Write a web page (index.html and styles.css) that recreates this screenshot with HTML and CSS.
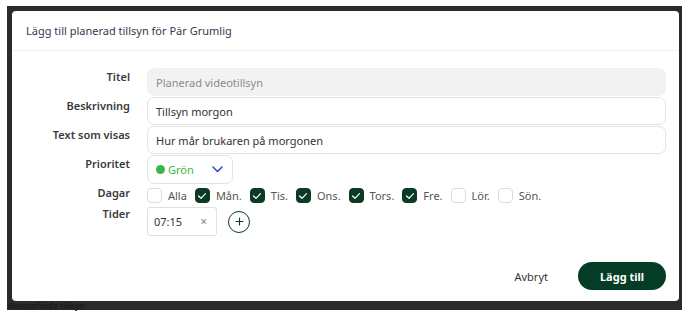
FILE: index.html
```html
<!DOCTYPE html>
<html lang="sv">
<head>
<meta charset="utf-8">
<link rel="stylesheet" href="styles.css">
</head>
<body>
<div class="overlay">
  <div class="modal">
    <div class="modal-header">Lägg till planerad tillsyn för Pär Grumlig</div>
    <div class="modal-body">
      <div class="label">Titel</div>
      <div class="input disabled">Planerad videotillsyn</div>

      <div class="label">Beskrivning</div>
      <div class="input">Tillsyn morgon</div>

      <div class="label">Text som visas</div>
      <div class="input">Hur mår brukaren på morgonen</div>

      <div class="label">Prioritet</div>
      <div class="field-row">
        <div class="select">
          <span class="dot"></span>
          <span class="select-text">Grön</span>
          <svg class="chevron" width="11" height="7" viewBox="0 0 11 7"><path d="M1 1 L5.5 5.5 L10 1" fill="none" stroke="#3550c4" stroke-width="1.6" stroke-linecap="round" stroke-linejoin="round"/></svg>
        </div>
      </div>

      <div class="label label-center">Dagar</div>
      <div class="days">
        <label class="day"><span class="box"></span><span class="day-text">Alla</span></label>
        <label class="day"><span class="box checked"><svg width="10" height="8" viewBox="0 0 10 8"><path d="M1.5 4 L4 6.3 L8.5 1.7" fill="none" stroke="#fff" stroke-width="1.2" stroke-linecap="round" stroke-linejoin="round"/></svg></span><span class="day-text">Mån.</span></label>
        <label class="day"><span class="box checked"><svg width="10" height="8" viewBox="0 0 10 8"><path d="M1.5 4 L4 6.3 L8.5 1.7" fill="none" stroke="#fff" stroke-width="1.2" stroke-linecap="round" stroke-linejoin="round"/></svg></span><span class="day-text">Tis.</span></label>
        <label class="day"><span class="box checked"><svg width="10" height="8" viewBox="0 0 10 8"><path d="M1.5 4 L4 6.3 L8.5 1.7" fill="none" stroke="#fff" stroke-width="1.2" stroke-linecap="round" stroke-linejoin="round"/></svg></span><span class="day-text">Ons.</span></label>
        <label class="day"><span class="box checked"><svg width="10" height="8" viewBox="0 0 10 8"><path d="M1.5 4 L4 6.3 L8.5 1.7" fill="none" stroke="#fff" stroke-width="1.2" stroke-linecap="round" stroke-linejoin="round"/></svg></span><span class="day-text">Tors.</span></label>
        <label class="day"><span class="box checked"><svg width="10" height="8" viewBox="0 0 10 8"><path d="M1.5 4 L4 6.3 L8.5 1.7" fill="none" stroke="#fff" stroke-width="1.2" stroke-linecap="round" stroke-linejoin="round"/></svg></span><span class="day-text">Fre.</span></label>
        <label class="day"><span class="box"></span><span class="day-text">Lör.</span></label>
        <label class="day"><span class="box"></span><span class="day-text">Sön.</span></label>
      </div>

      <div class="label">Tider</div>
      <div class="times">
        <div class="chip"><span class="chip-text">07:15</span><span class="chip-x">×</span></div>
        <div class="add">
          <svg width="9" height="9" viewBox="0 0 9 9"><path d="M4.5 1 V8 M1 4.5 H8" stroke="#0b3b25" stroke-width="1.1" stroke-linecap="round"/></svg>
        </div>
      </div>
    </div>
    <div class="modal-footer">
      <button class="btn-cancel">Avbryt</button>
      <button class="btn-primary">Lägg till</button>
    </div>
  </div>
  <div class="under-text">Genomförde tillsyn</div>
</div>
</body>
</html>
```

FILE: styles.css
```css
* { box-sizing: border-box; }
html, body {
  margin: 0;
  padding: 0;
  background: #ffffff;
}
body {
  width: 688px;
  height: 313px;
  padding: 6px 6px 3px 7px;
  font-family: "Noto Sans", "Open Sans", sans-serif;
  overflow: hidden;
}
.overlay {
  width: 675px;
  height: 304px;
  background: #2b2b2b;
  padding: 5px 3px 0 5px;
  display: flex;
  flex-direction: column;
}
.modal {
  width: 667px;
  height: 290px;
  background: #fff;
  border-radius: 4px;
  display: flex;
  flex-direction: column;
}
.under-text {
  height: 9px;
  line-height: 9px;
  font-size: 8px;
  font-weight: 700;
  color: #1d1d1d;
  margin-left: -4px;
}
.modal-header {
  height: 40px;
  padding: 0 14px;
  display: flex;
  align-items: center;
  font-size: 11px;
  color: #3b3550;
  border-bottom: 1px solid #f0f0f0;
}
.modal-body {
  display: grid;
  grid-template-columns: 118px 1fr;
  column-gap: 17px;
  row-gap: 1px;
  padding: 17px 13px 0 0;
}
.label {
  text-align: right;
  font-size: 11px;
  font-weight: 600;
  color: #3a3a3a;
  line-height: 14px;
  padding-top: 2px;
}
.label-center {
  padding-top: 1px;
}
.input {
  height: 28px;
  border: 1px solid #e3e3e3;
  border-radius: 7px;
  padding: 0 8px;
  display: flex;
  align-items: center;
  font-size: 11px;
  color: #333;
}
.input.disabled {
  background: #f2f2f2;
  border-color: #f2f2f2;
  color: #8a8a8a;
}
.field-row {
  display: flex;
}
.select {
  width: 86px;
  height: 29px;
  border: 1px solid #e3e3e3;
  border-radius: 7px;
  display: flex;
  align-items: center;
  padding: 0 9px 0 8px;
  font-size: 11px;
}
.dot {
  width: 9px;
  height: 9px;
  border-radius: 50%;
  background: #3cb54a;
  margin-right: 3px;
}
.select-text {
  color: #3cb54a;
  flex: 1;
}
.chevron {
  display: block;
}
.days {
  display: flex;
  align-items: center;
  height: 17px;
  margin-top: 2px;
}
.day {
  display: flex;
  align-items: center;
  margin-right: 8px;
}
.box {
  width: 15px;
  height: 15px;
  border: 1px solid #dcdcdc;
  border-radius: 4px;
  margin-right: 6px;
  display: flex;
  align-items: center;
  justify-content: center;
}
.box.checked {
  background: #0b3b25;
  border-color: #0b3b25;
}
.box svg { display: block; }
.day-text {
  font-size: 11px;
  color: #555;
}
.times {
  display: flex;
  align-items: center;
  margin-top: 2px;
}
.chip {
  width: 70px;
  height: 29px;
  border: 1px solid #e0e0e0;
  border-radius: 3px;
  display: flex;
  align-items: center;
  padding: 0 9px 0 6px;
  font-size: 11px;
}
.chip-text {
  flex: 1;
  color: #333;
}
.chip-x {
  color: #888;
  font-size: 12px;
}
.add {
  width: 22px;
  height: 22px;
  margin-left: 11px;
  border: 1px solid #0b3b25;
  border-radius: 50%;
  display: flex;
  align-items: center;
  justify-content: center;
}
.add svg { display: block; }
.modal-footer {
  margin-top: auto;
  display: flex;
  justify-content: flex-end;
  align-items: center;
  padding: 0 13px 11px 0;
}
.btn-cancel {
  background: none;
  border: none;
  font-family: inherit;
  font-size: 11px;
  color: #333;
  padding: 0;
  margin-right: 30px;
}
.btn-primary {
  width: 88px;
  height: 28px;
  border: none;
  border-radius: 14px;
  background: #053c25;
  color: #fff;
  font-family: inherit;
  font-size: 11px;
  font-weight: 700;
}
```
